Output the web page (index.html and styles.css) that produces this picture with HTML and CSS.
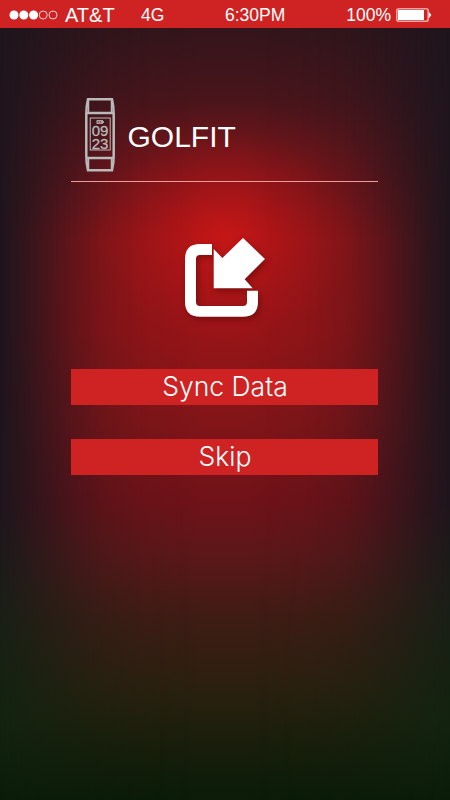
FILE: index.html
```html
<!DOCTYPE html>
<html lang="en">

<head>
    <meta charset="UTF-8">
    <meta name="viewport" content="width=device-width, initial-scale=1.0">
    <title>Golfit</title>
    <link rel="stylesheet" href="styles.css">
</head>

<body>
    <header class="status-bar">
        <div class="carrier">
            <svg class="signal" width="50" height="12" viewBox="0 0 50 12">
                <g fill="#fff">
                    <circle cx="5" cy="6" r="4.5"/>
                    <circle cx="14.8" cy="6" r="4.5"/>
                    <circle cx="24.6" cy="6" r="4.5"/>
                </g>
                <g fill="none" stroke="#f8cccc">
                    <circle cx="34.2" cy="6" r="4"/>
                    <circle cx="44" cy="6" r="4"/>
                </g>
            </svg>
            <span class="carrier-name">AT&amp;T</span>
            <span>4G</span>
        </div>
        <span class="time">6:30PM</span>
        <div class="power">
            <span>100%</span>
            <svg class="battery" width="36" height="14" viewBox="0 0 36 14">
                <rect x=".8" y=".8" width="31.4" height="12.4" rx="2" fill="none" stroke="#f3a6a6" stroke-width="1.6"/>
                <rect x="2" y="2" width="26" height="10" fill="#fff"/>
                <path d="M33 4l2.400 3L33 10z" fill="#fff"/>
            </svg>
        </div>
    </header>

    <main class="content">
        <div class="brand">
            <svg class="band" width="30" height="74" viewBox="0 0 30 74">
                <g fill="none" stroke="#b9b9b9" stroke-width="2.5">
                    <path d="M3 1.300h24q1.700 7 1.700 15v41q0 8-1.700 15H3q-1.700-7-1.700-15v-41q0-8 1.700-15z"/>
                    <path d="M2 15h26M2 60h26"/>
                    <path d="M3.500 2v13M26.500 2v13M3.500 60v12M26.500 60v12" stroke-width="1.500"/>
                    <rect x="5.200" y="20" width="20" height="32" stroke-width="1"/>
                </g>
                <path d="M11.500 22h6.500v1h1v2h-1v1h-6.500z" fill="#a99c9e"/>
                <path d="M13.500 23v2M15.500 23v2" stroke="#6b3036" stroke-width=".6"/>
                <text class="band-digits"><tspan x="15" y="38">09</tspan><tspan x="15" y="50.500">23</tspan></text>
            </svg>
            <h1>GOLFIT</h1>
        </div>

        <svg class="sync-icon" width="82" height="82" viewBox="0 0 82 82" fill="#fff">
            <path d="M28 7H16Q1 7 1 22v43q0 14.700 15 14.700h43q15 0 15-14.700V53.700H63V65q0 4-4 4H16q-4 0-4-4V22q0-4 4-4h12z"/>
            <path d="M29.700 12L38.300 21 59 1 81 22 60.700 42.300 68.700 51.300H29.700z"/>
        </svg>

        <button type="button" class="btn">Sync Data</button>
        <button type="button" class="btn">Skip</button>
    </main>
</body>

</html>
```
FILE: styles.css
```css
* {
    box-sizing: border-box;
}

body {
    position: relative;
    margin: 0;
    min-height: 100vh;
    font-family: "Liberation Sans", Arial, sans-serif;
    color: #fff;
    background: linear-gradient(#1f151d 0, #1f151d 500px, #1a1f17 610px, #13230f 720px, #0b1d08 800px);
}

/* red glow, faded out towards both sides */
body::before {
    content: "";
    position: absolute;
    inset: 0;
    z-index: -1;
    background:
        radial-gradient(ellipse 175px 135px at 225px 235px, rgba(203, 22, 22, 0.88), rgba(190, 20, 22, 0.42) 45%, rgba(160, 20, 22, 0.12) 78%, rgba(160, 20, 22, 0)),
        linear-gradient(#33151b 28px, #49151b 100px, #74151a 180px, #961518 240px, #961417 330px, #821518 420px, #701218 500px, #5c1719 555px, #3e1c14 620px, #2a200f 690px, #171e0b 750px, #0a1b07 800px);
    -webkit-mask-image: linear-gradient(to right, transparent, rgba(0, 0, 0, 0.15) 5%, rgba(0, 0, 0, 0.56) 16%, rgba(0, 0, 0, 0.78) 23%, rgba(0, 0, 0, 0.92) 32%, #000 45%, #000 55%, rgba(0, 0, 0, 0.92) 68%, rgba(0, 0, 0, 0.78) 77%, rgba(0, 0, 0, 0.56) 84%, rgba(0, 0, 0, 0.15) 95%, transparent);
    mask-image: linear-gradient(to right, transparent, rgba(0, 0, 0, 0.15) 5%, rgba(0, 0, 0, 0.56) 16%, rgba(0, 0, 0, 0.78) 23%, rgba(0, 0, 0, 0.92) 32%, #000 45%, #000 55%, rgba(0, 0, 0, 0.92) 68%, rgba(0, 0, 0, 0.78) 77%, rgba(0, 0, 0, 0.56) 84%, rgba(0, 0, 0, 0.15) 95%, transparent);
}

.status-bar {
    display: grid;
    grid-template-columns: 216px auto 1fr;
    align-items: center;
    height: 28px;
    padding: 2px 18px 0 9px;
    font-size: 17.5px;
    background-color: #cf2323;
}

.carrier,
.power {
    display: flex;
    align-items: center;
}

.carrier-name {
    width: 76px;
    margin-left: 6px;
    font-size: 20px;
}

.power {
    justify-content: flex-end;
    gap: 5px;
}

.content {
    display: flex;
    flex-direction: column;
    width: 307px;
    margin-left: 71px;
    padding-top: 70px;
}

.brand {
    display: flex;
    align-items: center;
    gap: 12.5px;
    height: 84px;
    padding: 0 0 9px 14px;
    border-bottom: 1px solid #ee9c9c;
}

h1 {
    margin: 4px 0 0;
    font-size: 30px;
    font-weight: normal;
}

.band-digits {
    font-family: "Liberation Sans", Arial, sans-serif;
    font-size: 15px;
    text-anchor: middle;
    fill: #b9b9b9;
    stroke: #b9b9b9;
    stroke-width: 0.3px;
}

.sync-icon {
    margin: 55px 0 50px 113px;
    filter: drop-shadow(2px 3px 3px rgba(60, 0, 0, 0.4));
}

.btn {
    height: 36px;
    margin-bottom: 34px;
    padding: 0 0 3px 1px;
    border: none;
    font-family: Inter, "Liberation Sans", sans-serif;
    font-size: 26.5px;
    font-weight: 300;
    color: #fff;
    background-color: #cf2323;
    cursor: pointer;
}
```
